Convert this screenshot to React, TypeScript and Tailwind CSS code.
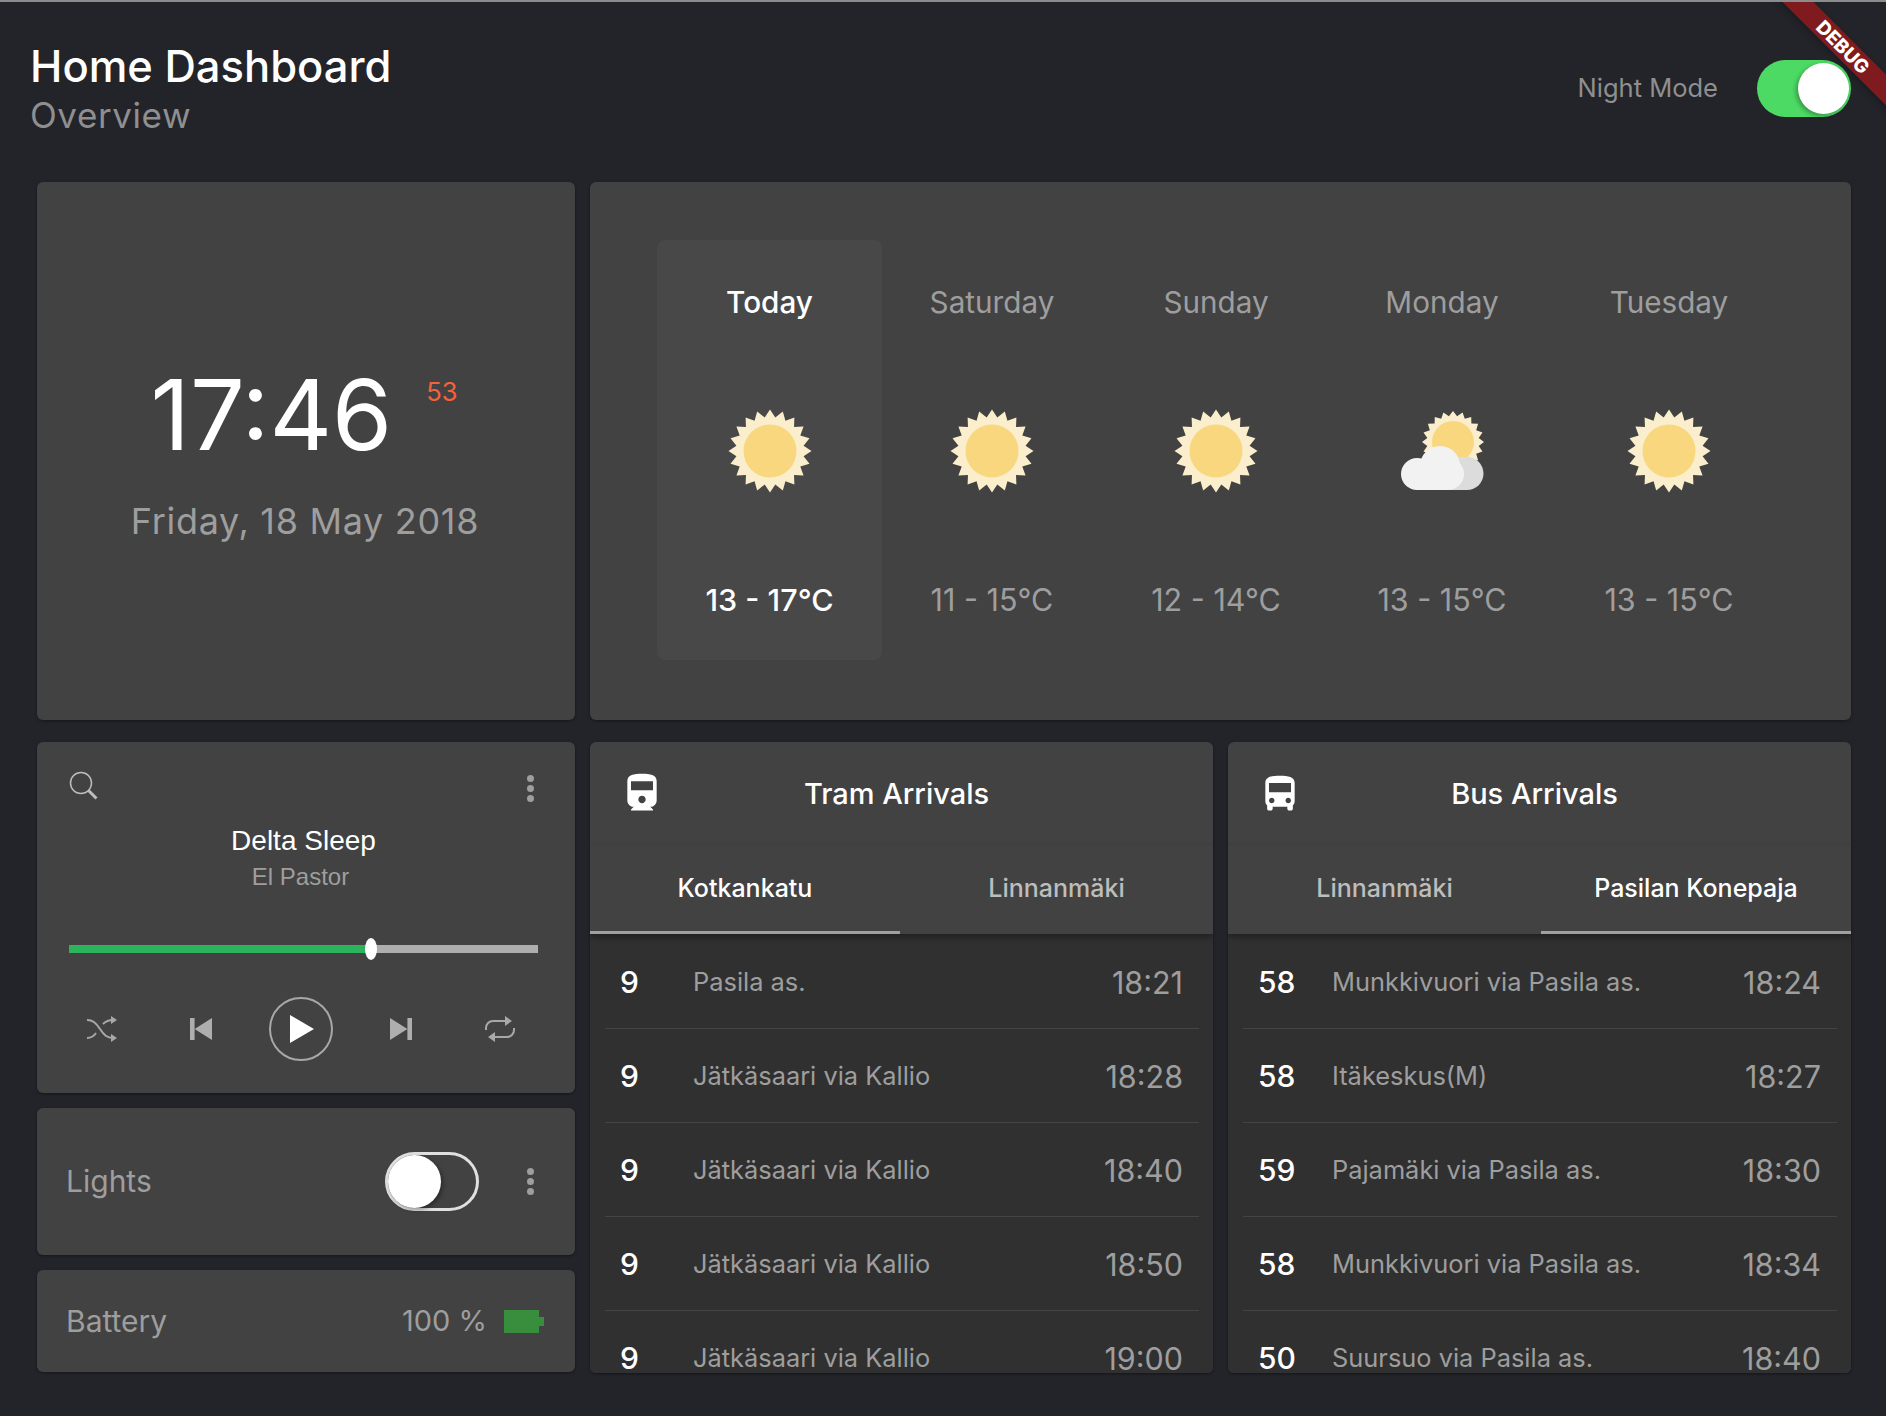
import React from "react";

const F = "[font-family:Inter,'Noto_Sans',sans-serif]";

function sunPoints(cx: number, cy: number, inner: number, outer: number, n: number) {
  const pts: string[] = [];
  for (let i = 0; i < n * 2; i++) {
    const r = i % 2 === 0 ? outer : inner;
    const a = (Math.PI * i) / n;
    pts.push(`${(cx + r * Math.cos(a)).toFixed(2)},${(cy + r * Math.sin(a)).toFixed(2)}`);
  }
  return pts.join(" ");
}

function Sun() {
  return (
    <svg width="84" height="84" viewBox="0 0 84 84">
      <polygon points={sunPoints(42, 42, 34, 41.5, 20)} fill="#fbeecd" />
      <circle cx="42" cy="42" r="26.5" fill="#f8d77e" />
    </svg>
  );
}

function CloudSun() {
  return (
    <svg width="84" height="84" viewBox="0 0 84 84">
      <polygon points={sunPoints(53, 33, 26, 31, 20)} fill="#fbeecd" />
      <circle cx="53" cy="33" r="21" fill="#f8d77e" />
      <circle cx="67" cy="64.5" r="16.5" fill="#dcdcdc" />
      <rect x="40" y="48" width="27" height="33" fill="#dcdcdc" />
      <circle cx="17" cy="65" r="16" fill="#f2f2f2" />
      <circle cx="40" cy="57" r="20" fill="#f2f2f2" />
      <circle cx="48" cy="65" r="16" fill="#f2f2f2" />
      <rect x="17" y="60" width="31" height="21" fill="#f2f2f2" />
    </svg>
  );
}

function Dots() {
  return (
    <div className="flex flex-col gap-[3px] items-center w-[8px]">
      <span className="w-[7px] h-[7px] rounded-full bg-[#9e9e9e]" />
      <span className="w-[7px] h-[7px] rounded-full bg-[#9e9e9e]" />
      <span className="w-[7px] h-[7px] rounded-full bg-[#9e9e9e]" />
    </div>
  );
}

const days = [
  { d: "Today", t: "13 - 17°C", active: true, w: "w-[225px]", icon: <Sun /> },
  { d: "Saturday", t: "11 - 15°C", active: false, w: "w-[220px]", icon: <Sun /> },
  { d: "Sunday", t: "12 - 14°C", active: false, w: "w-[228px]", icon: <Sun /> },
  { d: "Monday", t: "13 - 15°C", active: false, w: "w-[224px]", icon: <CloudSun /> },
  { d: "Tuesday", t: "13 - 15°C", active: false, w: "w-[230px]", icon: <Sun /> },
];

const tram = [
  ["9", "Pasila as.", "18:21"],
  ["9", "Jätkäsaari via Kallio", "18:28"],
  ["9", "Jätkäsaari via Kallio", "18:40"],
  ["9", "Jätkäsaari via Kallio", "18:50"],
  ["9", "Jätkäsaari via Kallio", "19:00"],
];
const bus = [
  ["58", "Munkkivuori via Pasila as.", "18:24"],
  ["58", "Itäkeskus(M)", "18:27"],
  ["59", "Pajamäki via Pasila as.", "18:30"],
  ["58", "Munkkivuori via Pasila as.", "18:34"],
  ["50", "Suursuo via Pasila as.", "18:40"],
];

const TRAIN =
  "M4 15.5C4 17.43 5.57 19 7.5 19L6 20.5v.5h12v-.5L16.5 19c1.93 0 3.5-1.57 3.5-3.5V5c0-3.5-3.58-4-8-4s-8 .5-8 4v10.5zm8 1.5c-1.1 0-2-.9-2-2s.9-2 2-2 2 .9 2 2-.9 2-2 2zm6-7H6V5h12v5z";
const BUS =
  "M4 16c0 .88.39 1.67 1 2.22V20c0 .55.45 1 1 1h1c.55 0 1-.45 1-1v-1h8v1c0 .55.45 1 1 1h1c.55 0 1-.45 1-1v-1.78c.61-.55 1-1.34 1-2.22V6c0-3.5-3.58-4-8-4s-8 .5-8 4v10zm3.5 1c-.83 0-1.5-.67-1.5-1.5S6.67 14 7.5 14s1.5.67 1.5 1.5S8.33 17 7.5 17zm9 0c-.83 0-1.5-.67-1.5-1.5s.67-1.5 1.5-1.5 1.5.67 1.5 1.5-.67 1.5-1.5 1.5zm1.5-6H6V6h12v5z";

function Arrivals({
  title,
  icon,
  tabs,
  active,
  rows,
  split,
  numCol,
}: {
  title: string;
  icon: string;
  tabs: string[];
  active: number;
  rows: string[][];
  split: string[];
  numCol: string;
}) {
  return (
    <div className="bg-[#424242] rounded-[6px] overflow-hidden flex flex-col h-[631px] shadow-[0_1px_3px_rgba(0,0,0,0.4)]">
      <div className="h-[103px] flex items-center pl-[30px] pt-[1px] shrink-0">
        <svg width="44" height="44" viewBox="0 0 24 24" fill="#ffffff" className="shrink-0">
          <path fillRule="evenodd" d={icon} />
        </svg>
        <div className="flex-1 text-center text-white text-[29px] font-medium pr-[84px]">{title}</div>
      </div>
      <div className="flex h-[89px] shrink-0 relative z-10 shadow-[0_3px_6px_rgba(0,0,0,0.35)]">
        {tabs.map((t, i) => (
          <div
            key={t}
            className={`${split[i]} flex items-start justify-center pt-[25px] text-[25px] font-medium border-b-[3px] ${
              i === active ? "text-white border-[#a0a0a0]" : "text-[#bdbdbd] border-transparent"
            }`}
          >
            {t}
          </div>
        ))}
      </div>
      <div className="flex-1 bg-[#303030] overflow-hidden pl-[15px] pr-[14px] pt-[1px]">
        {rows.map((r, i) => (
          <div key={i} className="h-[94px] flex items-center border-b border-[#444444] pt-[2px]">
            <div className={`${numCol} pl-[15px] text-white text-[30px] font-medium shrink-0`}>{r[0]}</div>
            <div className="flex-1 text-[#9e9e9e] text-[25.4px]">{r[1]}</div>
            <div className="text-[#9e9e9e] text-[30.5px] pr-[16px]">{r[2]}</div>
          </div>
        ))}
      </div>
    </div>
  );
}

export default function App() {
  return (
    <div className={`relative w-[1886px] h-[1416px] bg-[#22242a] overflow-hidden ${F}`}>
      <div className="h-[2px] bg-[#8c8c8c]" />
      <header className="h-[180px] flex items-start justify-between pl-[30px] pr-[35px]">
        <div className="pt-[39px]">
          <div className="text-white text-[43.5px] font-medium leading-[50px]">Home Dashboard</div>
          <div className="text-[#8f8f8f] text-[35px] leading-[46px] mt-[1px] tracking-[0.6px]">Overview</div>
        </div>
        <div className="flex items-center gap-[39px] pt-[58px]">
          <span className="text-[#8f8f8f] text-[25.5px]">Night Mode</span>
          <div className="relative w-[94px] h-[57px] rounded-full bg-[#4cd964]">
            <span className="absolute right-[2px] top-[3px] w-[51px] h-[51px] rounded-full bg-white shadow-[-2px_2px_4px_rgba(0,0,0,0.3)]" />
          </div>
        </div>
      </header>

      <main className="ml-[37px] mr-[35px] grid grid-cols-[538px_1fr] grid-rows-[538px_631px] gap-x-[15px] gap-y-[22px]">
        <section className="bg-[#424242] rounded-[6px] flex flex-col items-center pt-[178px] shadow-[0_1px_3px_rgba(0,0,0,0.4)]">
          <div className="flex items-start gap-[34px] pr-[4px]">
            <span className="text-white text-[97px] leading-[110px] font-normal">17:46</span>
            <span className="text-[#f4623a] text-[25.5px] leading-[30px] mt-[17px]">53</span>
          </div>
          <div className="text-[#9e9e9e] text-[36px] leading-[44px] mt-[29px] pr-[2px] tracking-[0.7px]">Friday, 18 May 2018</div>
        </section>

        <section className="bg-[#424242] rounded-[6px] flex items-start pt-[58px] pl-[67px] shadow-[0_1px_3px_rgba(0,0,0,0.4)]">
          {days.map((d) => (
            <div
              key={d.d}
              className={`${d.w} h-[420px] rounded-[8px] flex flex-col items-center shrink-0 ${d.active ? "bg-[#484848]" : ""}`}
            >
              <div className={`mt-[44px] text-[29.7px] leading-[36px] ${d.active ? "text-white font-medium" : "text-[#9e9e9e]"}`}>{d.d}</div>
              <div className="mt-[89px] h-[84px]">{d.icon}</div>
              <div className={`mt-[89px] text-[30.5px] leading-[36px] ${d.active ? "text-white font-medium" : "text-[#9e9e9e]"}`}>{d.t}</div>
            </div>
          ))}
        </section>

        <div className="flex flex-col gap-[15px]">
          <section className="h-[351px] bg-[#424242] rounded-[6px] pl-[32px] pr-[37px] pt-[30px] shadow-[0_1px_3px_rgba(0,0,0,0.4)]">
            <div className="flex items-start justify-between h-[40px] pr-[4px]">
              <svg width="30" height="30" viewBox="0 0 30 30" fill="none" stroke="#bdbdbd" className="-mt-[1px]">
                <circle cx="12" cy="12" r="10.5" strokeWidth="1.5" />
                <path d="M19.5 19.5L27.5 27.5" strokeWidth="3" />
              </svg>
              <div className="pt-[3px]"><Dots /></div>
            </div>
            <div className="text-center text-white text-[28px] leading-[32px] mt-[13px] [font-family:'Liberation_Sans',sans-serif]">Delta Sleep</div>
            <div className="text-center text-[#9e9e9e] text-[24px] leading-[28px] mt-[6px] pr-[6px] [font-family:'Liberation_Sans',sans-serif]">El Pastor</div>
            <div className="relative mt-[54px] h-[8px] flex">
              <div className="w-[302px] bg-[#2bb45c]" />
              <div className="flex-1 bg-[#aeaeae]" />
              <span className="absolute left-[296px] -top-[7px] w-[12px] h-[22px] rounded-[50%] bg-white" />
            </div>
            <div className="mt-[44px] -ml-[17px] -mr-[12px] grid grid-cols-5 items-center justify-items-center h-[64px]">
              <svg width="32" height="26" viewBox="0 0 32 26" fill="none" stroke="#a8a8a8" strokeWidth="2">
                <path d="M1 4c6 0 9 3 13 9s7 9 13 9" />
                <path d="M1 22c4 0 7-2 9-5M17 8c2-2 5-4 10-4" />
                <path d="M25 0l6 4-6 4zM25 18l6 4-6 4z" fill="#a8a8a8" stroke="none" />
              </svg>
              <svg width="22" height="22" viewBox="0 0 24 24" fill="#aeaeae">
                <path d="M0 0h5v24H0zM24 0v24L5 12z" />
              </svg>
              <div className="w-[64px] h-[64px] rounded-full border-2 border-[#a8a8a8] flex items-center justify-center">
                <svg width="24" height="28" viewBox="0 0 24 28" fill="#ffffff" className="ml-[2px]"><path d="M0 0l24 14L0 28z" /></svg>
              </div>
              <svg width="22" height="22" viewBox="0 0 24 24" fill="#aeaeae">
                <path d="M24 0h-5v24h5zM0 0v24l19-12z" />
              </svg>
              <svg width="32" height="28" viewBox="0 0 32 28" fill="none" stroke="#a8a8a8" strokeWidth="2">
                <path d="M22 6H9a7 7 0 0 0-7 7v2" />
                <path d="M10 22h13a7 7 0 0 0 7-7v-2" />
                <path d="M21 1l7 5-7 5zM11 17l-7 5 7 5z" fill="#a8a8a8" stroke="none" />
              </svg>
            </div>
          </section>

          <section className="h-[147px] bg-[#424242] rounded-[6px] flex items-center pl-[29px] pr-[41px] shadow-[0_1px_3px_rgba(0,0,0,0.4)]">
            <span className="text-[#9e9e9e] text-[30px] flex-1">Lights</span>
            <div className="relative w-[94px] h-[59px] rounded-full border-[3px] border-[#e0e0e0] mr-[47px]">
              <span className="absolute left-0 top-0 w-[53px] h-[53px] rounded-full bg-white shadow-[2px_2px_4px_rgba(0,0,0,0.35)]" />
            </div>
            <Dots />
          </section>

          <section className="h-[102px] bg-[#424242] rounded-[6px] flex items-center pl-[29px] pr-[31px] shadow-[0_1px_3px_rgba(0,0,0,0.4)]">
            <span className="text-[#9e9e9e] text-[30px] flex-1">Battery</span>
            <span className="text-[#9e9e9e] text-[29px] mr-[17px]">100 %</span>
            <svg width="40" height="23" viewBox="0 0 40 23" fill="#388e3c">
              <path d="M0 0h35v7h5v9h-5v7H0z" />
            </svg>
          </section>
        </div>

        <div className="grid grid-cols-[623px_623px] gap-x-[15px]">
          <Arrivals title="Tram Arrivals" icon={TRAIN} tabs={["Kotkankatu", "Linnanmäki"]} active={0} rows={tram} split={["w-[310px]", "flex-1"]} numCol="w-[88px]" />
          <Arrivals title="Bus Arrivals" icon={BUS} tabs={["Linnanmäki", "Pasilan Konepaja"]} active={1} rows={bus} split={["w-[313px]", "flex-1"]} numCol="w-[89px]" />
        </div>
      </main>

      <div className="absolute top-[2px] right-0 w-[120px] h-[120px] overflow-hidden pointer-events-none">
        <div className="absolute left-[-8px] top-[34px] w-[170px] h-[22px] rotate-45 bg-[#7f1a1f] flex items-center justify-center text-white text-[19px] font-extrabold leading-none shadow-[0_2px_6px_rgba(0,0,0,0.3)]">
          DEBUG
        </div>
      </div>
    </div>
  );
}
